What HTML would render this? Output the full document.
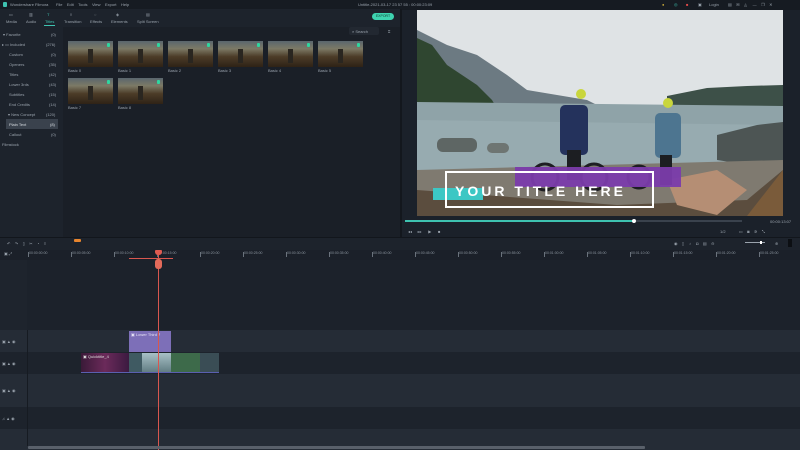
<!DOCTYPE html>
<html><head><meta charset="utf-8"><style>
*{margin:0;padding:0;box-sizing:border-box}
body{width:800px;height:450px;overflow:hidden;background:#1b212a;font-family:"Liberation Sans",sans-serif;color:#9aa3ad;font-size:4px;position:relative}
.a{position:absolute}
.t{position:absolute;font-size:4px;color:#9aa3ad;white-space:nowrap}
.r{position:absolute;top:251px;font-size:3.5px;color:#8a939d;white-space:nowrap}
.r:before{content:"";position:absolute;left:-1px;top:1px;width:1px;height:5px;background:#6a727c}
.thumb{position:absolute;width:45px;height:26px;background:linear-gradient(180deg,#5a666e 0%,#7c7a66 30%,#4c3c28 60%,#2e2216 100%)}
.thumb:after{content:"";position:absolute;right:3px;top:2px;width:3px;height:4px;background:#2fd6a0;border-radius:1px}
.thumb i{position:absolute;left:20px;top:8px;width:5px;height:14px;background:#2a2620}
</style></head><body>
<div class="a" style="left:0;top:0;width:800px;height:9px;background:#161b22"></div>
<div class="a" style="left:3px;top:2px;width:4px;height:5px;background:#3ec2b0;border-radius:1px"></div>
<div class="t" style="left:10px;top:2px">Wondershare Filmora</div>
<div class="t" style="left:56px;top:2px">File&nbsp;&nbsp;&nbsp; Edit&nbsp;&nbsp;&nbsp; Tools&nbsp;&nbsp;&nbsp; View&nbsp;&nbsp;&nbsp; Export&nbsp;&nbsp;&nbsp; Help</div>
<div class="t" style="left:358px;top:2px">Untitle-2021-03-17 23 57 55 : 00:00:23:09</div>
<div class="t" style="left:662px;top:2px;color:#c9a93a">●</div>
<div class="t" style="left:674px;top:2px;color:#3ec2b0">◎</div>
<div class="t" style="left:686px;top:2px;color:#e04a4a">■</div>
<div class="t" style="left:698px;top:2px">▣</div>
<div class="t" style="left:709px;top:2px">Login</div>
<div class="t" style="left:728px;top:2px">▤&nbsp;&nbsp;&nbsp; ✉&nbsp;&nbsp;&nbsp; ◬&nbsp;&nbsp;&nbsp;&nbsp; —&nbsp;&nbsp;&nbsp; ❐&nbsp;&nbsp;&nbsp; ✕</div>
<div class="a" style="left:0;top:9px;width:400px;height:18px;background:#1d232c"></div>
<div class="t" style="left:6px;top:19px">Media</div>
<div class="t" style="left:26px;top:19px">Audio</div>
<div class="t" style="left:45px;top:19px;color:#3ec2b0">Titles</div>
<div class="a" style="left:44px;top:25px;width:11px;height:1px;background:#3ec2b0"></div>
<div class="t" style="left:64px;top:19px">Transition</div>
<div class="t" style="left:90px;top:19px">Effects</div>
<div class="t" style="left:111px;top:19px">Elements</div>
<div class="t" style="left:137px;top:19px">Split Screen</div>
<div class="t" style="left:9px;top:12px">▭</div><div class="t" style="left:29px;top:12px">▥</div><div class="t" style="left:47px;top:12px;color:#3ec2b0">T</div><div class="t" style="left:70px;top:12px">◊</div><div class="t" style="left:94px;top:12px">◌</div><div class="t" style="left:116px;top:12px">◈</div><div class="t" style="left:146px;top:12px">▤</div>
<div class="a" style="left:400px;top:9px;width:400px;height:1px;background:#161b22"></div>
<div class="a" style="left:372px;top:13px;width:22px;height:7px;background:#3ed3b0;border-radius:4px;font-size:3.5px;color:#0f3b30;text-align:center;line-height:7px">EXPORT</div>
<div class="a" style="left:0;top:27px;width:63px;height:210px;background:#1d232c"></div>
<div class="t" style="left:3px;top:32px">▾ Favorite</div><div class="t" style="left:51px;top:32px">(0)</div>
<div class="t" style="left:2px;top:42px">▸ ▭ Included</div><div class="t" style="left:46px;top:42px">(276)</div>
<div class="t" style="left:9px;top:52px">Custom</div><div class="t" style="left:51px;top:52px">(0)</div>
<div class="t" style="left:9px;top:62px">Openers</div><div class="t" style="left:49px;top:62px">(35)</div>
<div class="t" style="left:9px;top:72px">Titles</div><div class="t" style="left:49px;top:72px">(42)</div>
<div class="t" style="left:9px;top:82px">Lower 3rds</div><div class="t" style="left:49px;top:82px">(43)</div>
<div class="t" style="left:9px;top:92px">Subtitles</div><div class="t" style="left:49px;top:92px">(15)</div>
<div class="t" style="left:9px;top:102px">End Credits</div><div class="t" style="left:49px;top:102px">(14)</div>
<div class="t" style="left:8px;top:112px">▾ New Concept</div><div class="t" style="left:46px;top:112px">(120)</div>
<div class="a" style="left:6px;top:119px;width:52px;height:10px;background:#3a424d"></div>
<div class="t" style="left:9px;top:122px;color:#d8dde2">Plain Text</div><div class="t" style="left:50px;top:122px;color:#d8dde2">(8)</div>
<div class="t" style="left:9px;top:132px">Callout</div><div class="t" style="left:51px;top:132px">(0)</div>
<div class="t" style="left:2px;top:142px">Filmstock</div>
<div class="a" style="left:63px;top:27px;width:337px;height:210px;background:#1a1f27"></div>
<div class="a" style="left:349px;top:27px;width:30px;height:8px;background:#222831;border-radius:2px"></div>
<div class="t" style="left:352px;top:29px">⌕ Search</div>
<div class="t" style="left:388px;top:29px">⌗</div>
<div class="thumb" style="left:68px;top:41px"><i></i></div>
<div class="thumb" style="left:118px;top:41px"><i></i></div>
<div class="thumb" style="left:168px;top:41px"><i></i></div>
<div class="thumb" style="left:218px;top:41px"><i></i></div>
<div class="thumb" style="left:268px;top:41px"><i></i></div>
<div class="thumb" style="left:318px;top:41px"><i></i></div>
<div class="thumb" style="left:68px;top:78px"><i></i></div>
<div class="thumb" style="left:118px;top:78px"><i></i></div>
<div class="t" style="left:68px;top:68px">Basic 0</div><div class="t" style="left:118px;top:68px">Basic 1</div><div class="t" style="left:168px;top:68px">Basic 2</div><div class="t" style="left:218px;top:68px">Basic 3</div><div class="t" style="left:268px;top:68px">Basic 4</div><div class="t" style="left:318px;top:68px">Basic 5</div>
<div class="t" style="left:68px;top:105px">Basic 7</div><div class="t" style="left:118px;top:105px">Basic 8</div>
<div class="a" style="left:400px;top:9px;width:2px;height:228px;background:#13171d"></div>
<div class="a" style="left:402px;top:10px;width:398px;height:227px;background:#1b212a"></div>
<svg class="a" style="left:417px;top:10px" width="366" height="206" viewBox="0 0 366 206">
<rect width="366" height="206" fill="#dfe3e5"/>
<path d="M0 20 L30 35 L60 45 L90 65 L110 80 L140 85 L170 90 L180 95 L0 95Z" fill="#6c7a82"/>
<path d="M0 28 L15 35 L30 55 L45 65 L60 75 L75 90 L78 95 L0 95Z" fill="#2f4630"/>
<path d="M250 86 L290 78 L330 76 L366 75 L366 100 L250 100Z" fill="#3d5048"/>
<path d="M0 92 L366 96 L366 175 L0 175Z" fill="#8fa3a8"/>
<path d="M0 110 L366 115 L366 160 L0 160Z" fill="#9cb0b5" opacity=".6"/>
<path d="M300 125 L340 115 L366 112 L366 160 L300 150Z" fill="#4d5554"/>
<rect x="20" y="128" width="40" height="14" rx="6" fill="#5e6664"/>
<rect x="70" y="133" width="22" height="10" rx="5" fill="#6e7572"/>
<path d="M0 160 L366 150 L366 206 L0 206Z" fill="#7f7a70"/>
<path d="M0 180 L200 195 L330 190 L366 160 L366 206 L0 206Z" fill="#5b4d3e"/>
<path d="M250 170 L300 160 L330 180 L300 205 L260 195Z" fill="#b58e74"/>
<path d="M330 206 L366 160 L366 206Z" fill="#7a5b3a"/>
<rect x="143" y="95" width="28" height="50" rx="5" fill="#24325c"/>
<rect x="150" y="140" width="14" height="30" fill="#1c1e22"/>
<circle cx="164" cy="84" r="5" fill="#c9d63d"/>
<rect x="238" y="103" width="26" height="45" rx="5" fill="#4d7590"/>
<rect x="243" y="145" width="12" height="30" fill="#1c1e22"/>
<circle cx="251" cy="93" r="5" fill="#c9d63d"/>
<circle cx="128" cy="167" r="13" fill="none" stroke="#1e1e22" stroke-width="3"/>
<circle cx="177" cy="167" r="13" fill="none" stroke="#1e1e22" stroke-width="3"/>
<circle cx="222" cy="167" r="11" fill="none" stroke="#1e1e22" stroke-width="3"/>
<rect x="98" y="157" width="166" height="20" fill="#7b3cab" opacity=".95"/>
<rect x="16" y="178" width="50" height="12" fill="#3cc7c4"/>
<rect x="29" y="162" width="207" height="35" fill="none" stroke="#fff" stroke-width="2"/>
<text x="38" y="186" font-family="Liberation Sans,sans-serif" font-weight="bold" font-size="14" fill="#fff" letter-spacing="3">YOUR TITLE HERE</text>
</svg>
<div class="a" style="left:405px;top:220px;width:229px;height:2px;background:#3ec2b0"></div>
<div class="a" style="left:634px;top:220px;width:108px;height:2px;background:#3a424d"></div>
<div class="a" style="left:632px;top:219px;width:4px;height:4px;border-radius:2px;background:#fff"></div>
<div class="t" style="left:770px;top:219px">00:00:13:07</div>
<div class="t" style="left:408px;top:229px">◂◂&nbsp;&nbsp;&nbsp;&nbsp; ▸▸&nbsp;&nbsp;&nbsp;&nbsp;&nbsp; ▶&nbsp;&nbsp;&nbsp;&nbsp;&nbsp; ■</div>
<div class="t" style="left:720px;top:229px">1/2&nbsp;&nbsp;&nbsp;&nbsp;&nbsp;&nbsp;&nbsp;&nbsp;&nbsp;&nbsp;&nbsp; ▭&nbsp;&nbsp;&nbsp; ◙&nbsp;&nbsp;&nbsp; ✲&nbsp;&nbsp;&nbsp; ⤡</div>
<div class="a" style="left:0;top:237px;width:800px;height:1px;background:#12161c"></div>
<div class="a" style="left:0;top:238px;width:800px;height:12px;background:#1d232c"></div>
<div class="t" style="left:7px;top:241px">↶&nbsp;&nbsp;&nbsp; ↷&nbsp;&nbsp;&nbsp; ▯&nbsp;&nbsp;&nbsp; ✂&nbsp;&nbsp;&nbsp; ◔&nbsp;&nbsp;&nbsp; ≡</div>
<div class="a" style="left:74px;top:239px;width:7px;height:3px;background:#e8852e;border-radius:1px"></div>
<div class="t" style="left:674px;top:241px">◉&nbsp;&nbsp;&nbsp; ▯&nbsp;&nbsp;&nbsp; ♁&nbsp;&nbsp;&nbsp; ◘&nbsp;&nbsp;&nbsp; ▤&nbsp;&nbsp;&nbsp; ⊖</div>
<div class="a" style="left:745px;top:242px;width:20px;height:1px;background:#9aa3ad"></div>
<div class="a" style="left:760px;top:241px;width:2px;height:3px;background:#fff"></div>
<div class="t" style="left:775px;top:241px">⊕</div>
<div class="a" style="left:788px;top:239px;width:4px;height:8px;background:#0c0f13"></div>
<div class="a" style="left:0;top:250px;width:800px;height:10px;background:#1b2029"></div>
<div class="t" style="left:4px;top:251px">▣ ⤢</div>
<div class="r" style="left:29px">00:00:00:00</div>
<div class="r" style="left:72px">00:00:05:00</div>
<div class="r" style="left:115px">00:00:10:00</div>
<div class="r" style="left:158px">00:00:15:00</div>
<div class="r" style="left:201px">00:00:20:00</div>
<div class="r" style="left:244px">00:00:25:00</div>
<div class="r" style="left:287px">00:00:30:00</div>
<div class="r" style="left:330px">00:00:35:00</div>
<div class="r" style="left:373px">00:00:40:00</div>
<div class="r" style="left:416px">00:00:45:00</div>
<div class="r" style="left:459px">00:00:50:00</div>
<div class="r" style="left:502px">00:00:55:00</div>
<div class="r" style="left:545px">00:01:00:00</div>
<div class="r" style="left:588px">00:01:05:00</div>
<div class="r" style="left:631px">00:01:10:00</div>
<div class="r" style="left:674px">00:01:15:00</div>
<div class="r" style="left:717px">00:01:20:00</div>
<div class="r" style="left:760px">00:01:25:00</div>
<div class="a" style="left:0;top:260px;width:800px;height:70px;background:#1c222b"></div>
<div class="a" style="left:0;top:260px;width:27px;height:70px;background:#1e242d"></div>
<div class="a" style="left:0;top:330px;width:800px;height:22px;background:#252c36"></div>
<div class="a" style="left:0;top:352px;width:800px;height:22px;background:#1d232c"></div>
<div class="a" style="left:0;top:374px;width:800px;height:33px;background:#252c36"></div>
<div class="a" style="left:0;top:407px;width:800px;height:22px;background:#1d232c"></div>
<div class="a" style="left:0;top:429px;width:800px;height:21px;background:#252c36"></div>
<div class="t" style="left:2px;top:339px">▣ ▲ ◉</div>
<div class="t" style="left:2px;top:361px">▣ ▲ ◉</div>
<div class="t" style="left:2px;top:388px">▣ ▲ ◉</div>
<div class="t" style="left:2px;top:416px">♫ ▲ ◉</div>
<div class="a" style="left:27px;top:330px;width:1px;height:116px;background:#161b22"></div>
<div class="a" style="left:129px;top:331px;width:42px;height:21px;background:#7d6fb8"></div>
<div class="t" style="left:131px;top:332px;color:#e6e2f5">▣ Lower Third 7</div>
<div class="a" style="left:81px;top:353px;width:48px;height:20px;background:linear-gradient(90deg,#3a1a38,#6b2a5a,#3b1a40)"></div>
<div class="t" style="left:83px;top:354px;color:#ddd">▣ Quicktitle_4</div>
<div class="a" style="left:129px;top:353px;width:13px;height:20px;background:#3f5a62"></div>
<div class="a" style="left:142px;top:353px;width:29px;height:20px;background:linear-gradient(180deg,#a8c0c6,#5e7a80)"></div>
<div class="a" style="left:171px;top:353px;width:29px;height:20px;background:#3d6a4a"></div>
<div class="a" style="left:200px;top:353px;width:19px;height:20px;background:#3a4d55"></div>
<div class="a" style="left:81px;top:372px;width:138px;height:1px;background:#5a5fb0"></div>
<div class="a" style="left:129px;top:258px;width:44px;height:1px;background:#d8574f"></div>
<div class="a" style="left:158px;top:250px;width:1px;height:200px;background:#d8574f"></div>
<div class="a" style="left:155px;top:250px;width:7px;height:5px;background:#e05a50;border-radius:1px 1px 3px 3px"></div>
<div class="a" style="left:155px;top:259px;width:7px;height:10px;background:#e36a5a;border-radius:3px"></div>
<div class="a" style="left:28px;top:446px;width:617px;height:3px;background:#59606a;border-radius:1px"></div>
</body></html>
